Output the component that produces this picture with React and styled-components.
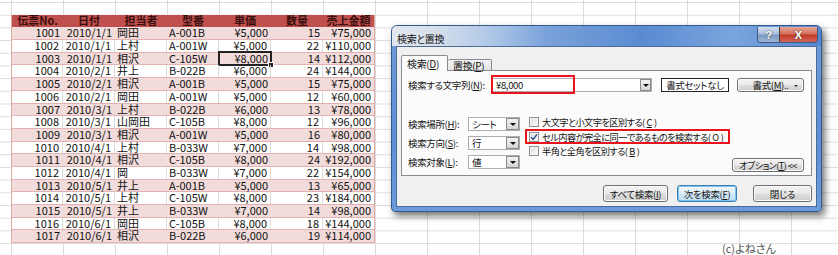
import React from 'react';
import styled, { createGlobalStyle, css } from 'styled-components';

const GlobalStyle = createGlobalStyle`
  html, body { margin: 0; padding: 0; background: #fff; }
  body {
    font-family: "Noto Sans CJK JP", "Noto Sans", sans-serif;
    color: #000;
  }
`;

const rows = [
  [1001, '2010/1/1', '岡田', 'A-001B', '¥5,000', 15, '¥75,000'],
  [1002, '2010/1/1', '上村', 'A-001W', '¥5,000', 22, '¥110,000'],
  [1003, '2010/1/1', '相沢', 'C-105W', '¥8,000', 14, '¥112,000'],
  [1004, '2010/2/1', '井上', 'B-022B', '¥6,000', 24, '¥144,000'],
  [1005, '2010/2/1', '相沢', 'A-001B', '¥5,000', 15, '¥75,000'],
  [1006, '2010/2/1', '岡田', 'A-001W', '¥5,000', 12, '¥60,000'],
  [1007, '2010/3/1', '上村', 'B-022B', '¥6,000', 13, '¥78,000'],
  [1008, '2010/3/1', '山岡田', 'C-105B', '¥8,000', 12, '¥96,000'],
  [1009, '2010/3/1', '相沢', 'A-001W', '¥5,000', 16, '¥80,000'],
  [1010, '2010/4/1', '上村', 'B-033W', '¥7,000', 14, '¥98,000'],
  [1011, '2010/4/1', '相沢', 'C-105B', '¥8,000', 24, '¥192,000'],
  [1012, '2010/4/1', '岡', 'B-033W', '¥7,000', 22, '¥154,000'],
  [1013, '2010/5/1', '井上', 'A-001B', '¥5,000', 13, '¥65,000'],
  [1014, '2010/5/1', '上村', 'C-105W', '¥8,000', 23, '¥184,000'],
  [1015, '2010/5/1', '井上', 'B-033W', '¥7,000', 14, '¥98,000'],
  [1016, '2010/6/1', '岡田', 'C-105B', '¥8,000', 18, '¥144,000'],
  [1017, '2010/6/1', '相沢', 'B-022B', '¥6,000', 19, '¥114,000'],
];

const headers = ['伝票No.', '日付', '担当者', '型番', '単価', '数量', '売上金額'];
const aligns = ['right', 'right', 'left', 'left', 'right', 'right', 'right'];

// Spreadsheet
const Sheet = styled.div`
  width: 838px;
  height: 255px;
  overflow: hidden;
  display: flex;
  align-items: flex-start;
  background-color: #fff;
  background-image:
    linear-gradient(to right, #dcdcdc 1px, transparent 1px),
    linear-gradient(to bottom, #dcdcdc 1px, transparent 1px);
  background-size: 52px 100%, 100% 12.7px;
  background-position: 11px 0, 0 2px;
`;

const Table = styled.div`
  margin: 14.7px 0 0 11px;
  display: flex;
  flex-direction: column;
  border-left: 1px solid #e0a9a7;
  border-right: 1px solid #e0a9a7;
  font-size: 11px;
  background: #fff;
`;

const Row = styled.div`
  display: grid;
  grid-template-columns: 51px repeat(5, 52px) 51px;
  height: 12.7px;
  box-sizing: border-box;
  background: ${p => (p.$shade ? '#f2dcdb' : '#fff')};
  border-bottom: 1px solid #e4b3b1;
`;

const HeadRow = styled(Row)`
  background: #c0504d;
  border-bottom: 1px solid #c0504d;
`;

const HeadCell = styled.div`
  text-align: center;
  font-weight: bold;
  line-height: 11.7px;
  color: #3a0f0d;
  white-space: nowrap;
`;

const Cell = styled.div`
  position: relative;
  padding: 0 3px 0 2px;
  text-align: ${p => p.$align};
  line-height: 11.7px;
  white-space: nowrap;
  color: #111;
  border-right: ${p => (p.$grid ? '1px solid #dcdcdc' : '0')};
  ${p => p.$selected && css`
    &::before {
      content: '';
      position: absolute;
      left: -1px; top: -2px; right: -1px; bottom: -2px;
      border: 2px solid #222;
    }
    &::after {
      content: '';
      position: absolute;
      right: -3px; bottom: -4px;
      width: 4px; height: 4px;
      background: #222;
      border: 1px solid #fff;
    }
  `}
`;

// Dialog
const DialogColumn = styled.div`
  margin: 25px 0 0 16px;
  display: flex;
  flex-direction: column;
`;

const Dialog = styled.div`
  width: 431px;
  height: 187px;
  box-sizing: border-box;
  display: flex;
  flex-direction: column;
  border: 1px solid #34598c;
  border-radius: 6px 6px 4px 4px;
  background: linear-gradient(to bottom, #6f9cd9, #5d8ed4 60%, #6c9bdb);
  box-shadow: 3px 4px 7px rgba(0, 0, 0, 0.55);
  overflow: hidden;
  font-size: 9.5px;
  letter-spacing: -0.35px;
  font-feature-settings: "palt";
  color: #111;
`;

const TitleBar = styled.div`
  height: 20px;
  display: flex;
  align-items: flex-start;
  padding-left: 5px;
  background: linear-gradient(to right, #e2e7ee 0%, #d6dfeb 10%, #b3cae8 22%, #7aa2da 36%, #5a8bd1 58%, #7aa4dd 80%, #5686cf 100%);
`;

const Title = styled.span`
  margin-top: 5px;
  font-size: 10px;
  color: #111;
`;

const TitleButtons = styled.div`
  margin: 1px 3px 0 auto;
  display: flex;
  height: 15px;
  border: 1px solid #3d5a85;
  border-top: 0;
  border-radius: 0 0 4px 4px;
  overflow: hidden;
`;

const TitleButton = styled.div`
  width: ${p => p.$w}px;
  display: flex;
  align-items: center;
  justify-content: center;
  color: #fff;
  font-weight: bold;
  font-size: 11px;
  letter-spacing: 0;
  font-family: "Liberation Sans", sans-serif;
  text-shadow: 0 0 2px #333;
  background: ${p => (p.$close
    ? 'linear-gradient(to bottom, #e6a595 0%, #d6705f 45%, #c23c28 55%, #d2665a 100%)'
    : 'linear-gradient(to bottom, #d4e0ef 0%, #a9bfdc 45%, #7d9ac3 55%, #9db5d6 100%)')};
  border-left: ${p => (p.$close ? '1px solid #4d3a3a' : '0')};
`;

const Client = styled.div`
  flex: 1;
  margin: 0 4px 4px;
  background: #f0f0f0;
  border: 1px solid #4b6b98;
  padding: 8px 4px 0 4px;
  display: flex;
  flex-direction: column;
`;

const TabStrip = styled.div`
  display: flex;
  align-items: flex-end;
  height: 16px;
  position: relative;
  z-index: 1;
  margin-bottom: -1px;
`;

const Tab = styled.div`
  box-sizing: border-box;
  width: ${p => p.$w}px;
  height: ${p => (p.$active ? 16 : 12)}px;
  border: 1px solid #898c95;
  border-bottom: ${p => (p.$active ? '0' : '1px solid #898c95')};
  border-left: ${p => (p.$after ? '0' : '1px solid #898c95')};
  border-radius: 2px 2px 0 0;
  background: ${p => (p.$active ? '#fbfbfb' : 'linear-gradient(to bottom, #f4f4f4, #e3e3e3)')};
  font-size: 10px;
  line-height: ${p => (p.$active ? 15 : 11)}px;
  padding-left: 5px;
  white-space: nowrap;
`;

const Key = styled.span`
  text-decoration: underline;
`;

const Panel = styled.div`
  box-sizing: border-box;
  height: 106px;
  border: 1px solid #898c95;
  background: #fbfbfb;
  padding: 7px 7px 0 6px;
  display: flex;
  flex-direction: column;
`;

const FindRow = styled.div`
  display: flex;
  align-items: center;
  height: 14px;
`;

const Label = styled.div`
  width: ${p => p.$w}px;
  flex-shrink: 0;
  white-space: nowrap;
`;

const Combo = styled.div`
  position: relative;
  box-sizing: border-box;
  width: ${p => p.$w}px;
  height: ${p => p.$h}px;
  border: 1px solid #abadb3;
  background: #fff;
  display: flex;
  align-items: center;
`;

const ComboText = styled.div`
  flex: 1;
  padding-left: 3px;
  white-space: nowrap;
`;

const DropButton = styled.div`
  width: ${p => p.$w || 11}px;
  height: 100%;
  box-sizing: border-box;
  border: 1px solid #8a8a8a;
  background: linear-gradient(to bottom, #f2f2f2, #d6d6d6);
  display: flex;
  align-items: center;
  justify-content: center;
  &::after {
    content: '';
    border-left: 3px solid transparent;
    border-right: 3px solid transparent;
    border-top: 3px solid #111;
    margin-top: 1px;
  }
`;

const Mark = styled.div`
  position: absolute;
  box-sizing: border-box;
  border: 2px solid #e8141b;
  pointer-events: none;
  left: ${p => p.$l}px;
  top: ${p => p.$t}px;
  width: ${p => p.$w}px;
  height: ${p => p.$h}px;
`;

const NoFormat = styled.div`
  margin-left: 9px;
  box-sizing: border-box;
  width: 68px;
  height: 14px;
  border: 1px solid #222;
  background: #fff;
  line-height: 12px;
  text-align: center;
  white-space: nowrap;
`;

const Button = styled.div`
  position: relative;
  box-sizing: border-box;
  width: ${p => p.$w}px;
  height: ${p => p.$h || 14}px;
  margin-left: ${p => p.$ml || 0}px;
  border: 1px solid ${p => (p.$focus ? '#3c7fb1' : '#707070')};
  border-radius: 3px;
  background: ${p => (p.$focus
    ? 'linear-gradient(to bottom, #f0f7fc 0%, #e4f0fa 48%, #d0e7f8 52%, #c3e0f6 100%)'
    : 'linear-gradient(to bottom, #f2f2f2 0%, #ebebeb 48%, #dddddd 52%, #cfcfcf 100%)')};
  box-shadow: ${p => (p.$focus ? 'inset 0 0 0 1px #7ec4ee' : 'inset 0 0 0 1px #fbfbfb')};
  display: flex;
  align-items: center;
  justify-content: center;
  white-space: nowrap;
  ${p => p.$tight && css`
    font-size: 9px;
    letter-spacing: -0.5px;
  `}
`;

const SmallArrow = styled.span`
  position: absolute;
  right: 5px;
  top: 6px;
  border-left: 2px solid transparent;
  border-right: 2px solid transparent;
  border-top: 2px solid #333;
`;

const Options = styled.div`
  margin-top: 25px;
  display: flex;
  align-items: flex-start;
  flex: 1;
`;

const SelectGrid = styled.div`
  display: grid;
  grid-template-columns: 60px 52px;
  grid-auto-rows: 14px;
  row-gap: 5px;
  align-items: center;
`;

const CheckList = styled.div`
  margin: -2px 0 0 9px;
  display: flex;
  flex-direction: column;
`;

const CheckRow = styled.div`
  position: relative;
  height: 14.5px;
  display: flex;
  align-items: center;
  gap: 2px;
  white-space: nowrap;
  font-size: 9.2px;
  letter-spacing: -0.55px;
`;

const Box = styled.span`
  box-sizing: border-box;
  width: 10px;
  height: 10px;
  margin-right: 1px;
  border: 1px solid #8e8f8f;
  background: linear-gradient(135deg, #dcdcdc, #fdfdfd);
  box-shadow: inset 0 0 0 1px #f4f4f4;
  display: flex;
  align-items: center;
  justify-content: center;
`;

const OptionButtonWrap = styled.div`
  margin-left: auto;
  align-self: flex-end;
  margin-bottom: 3px;
`;

const Footer = styled.div`
  display: flex;
  justify-content: flex-end;
  margin-top: 9px;
`;

const Credit = styled.div`
  margin: 28px 0 0 331px;
  font-size: 11px;
  color: #555;
  font-feature-settings: "palt";
  white-space: nowrap;
`;

const Check = () => (
  <svg width="8" height="8" viewBox="0 0 8 8">
    <path d="M1 4.2 L3.2 6.4 L7 1.4" fill="none" stroke="#2b4f8a" strokeWidth="1.5" />
  </svg>
);

const SpreadTable = () => (
  <Table>
    <HeadRow>
      {headers.map(h => <HeadCell key={h}>{h}</HeadCell>)}
    </HeadRow>
    {rows.map((r, i) => {
      const shade = i % 2 === 0;
      return (
        <Row key={r[0]} $shade={shade}>
          {r.map((v, j) => (
            <Cell
              key={j}
              $align={aligns[j]}
              $grid={!shade && j < 6}
              $selected={i === 2 && j === 4}
            >
              {v}
            </Cell>
          ))}
        </Row>
      );
    })}
  </Table>
);

const FindDialog = () => (
  <Dialog>
    <TitleBar>
      <Title>検索と置換</Title>
      <TitleButtons>
        <TitleButton $w={21}>?</TitleButton>
        <TitleButton $w={37} $close>X</TitleButton>
      </TitleButtons>
    </TitleBar>
    <Client>
      <TabStrip>
        <Tab $w={47} $active>検索(<Key>D</Key>)</Tab>
        <Tab $w={44} $after>置換(<Key>P</Key>)</Tab>
      </TabStrip>
      <Panel>
        <FindRow>
          <Label $w={84}>検索する文字列(<Key>N</Key>):</Label>
          <Combo $w={160} $h={14}>
            <ComboText>¥8,000</ComboText>
            <DropButton $w={11} />
            <Mark $l={-2} $t={-4} $w={84} $h={19} />
          </Combo>
          <NoFormat>書式セットなし</NoFormat>
          <Button $w={67} $ml={8}>
            書式(<Key>M</Key>)..
            <SmallArrow />
          </Button>
        </FindRow>
        <Options>
          <SelectGrid>
            <Label $w={60}>検索場所(<Key>H</Key>):</Label>
            <Combo $w={52} $h={14}><ComboText>シート</ComboText><DropButton $w={13} /></Combo>
            <Label $w={60}>検索方向(<Key>S</Key>):</Label>
            <Combo $w={52} $h={14}><ComboText>行</ComboText><DropButton $w={13} /></Combo>
            <Label $w={60}>検索対象(<Key>L</Key>):</Label>
            <Combo $w={52} $h={14}><ComboText>値</ComboText><DropButton $w={13} /></Combo>
          </SelectGrid>
          <CheckList>
            <CheckRow><Box />大文字と小文字を区別する(<Key>C</Key>)</CheckRow>
            <CheckRow>
              <Box><Check /></Box>セル内容が完全に同一であるものを検索する(<Key>O</Key>)
              <Mark $l={-4} $t={-1} $w={205} $h={15} />
            </CheckRow>
            <CheckRow><Box />半角と全角を区別する(<Key>B</Key>)</CheckRow>
          </CheckList>
          <OptionButtonWrap>
            <Button $w={72} $tight>オプション(<Key>T</Key>) &lt;&lt;</Button>
          </OptionButtonWrap>
        </Options>
      </Panel>
      <Footer>
        <Button $w={65} $h={17}>すべて検索(<Key>I</Key>)</Button>
        <Button $w={60} $h={17} $ml={9} $focus>次を検索(<Key>F</Key>)</Button>
        <Button $w={59} $h={17} $ml={16}>閉じる</Button>
      </Footer>
    </Client>
  </Dialog>
);

export default function App() {
  return (
    <>
      <GlobalStyle />
      <Sheet>
        <SpreadTable />
        <DialogColumn>
          <FindDialog />
          <Credit>(c)よねさん</Credit>
        </DialogColumn>
      </Sheet>
    </>
  );
}
